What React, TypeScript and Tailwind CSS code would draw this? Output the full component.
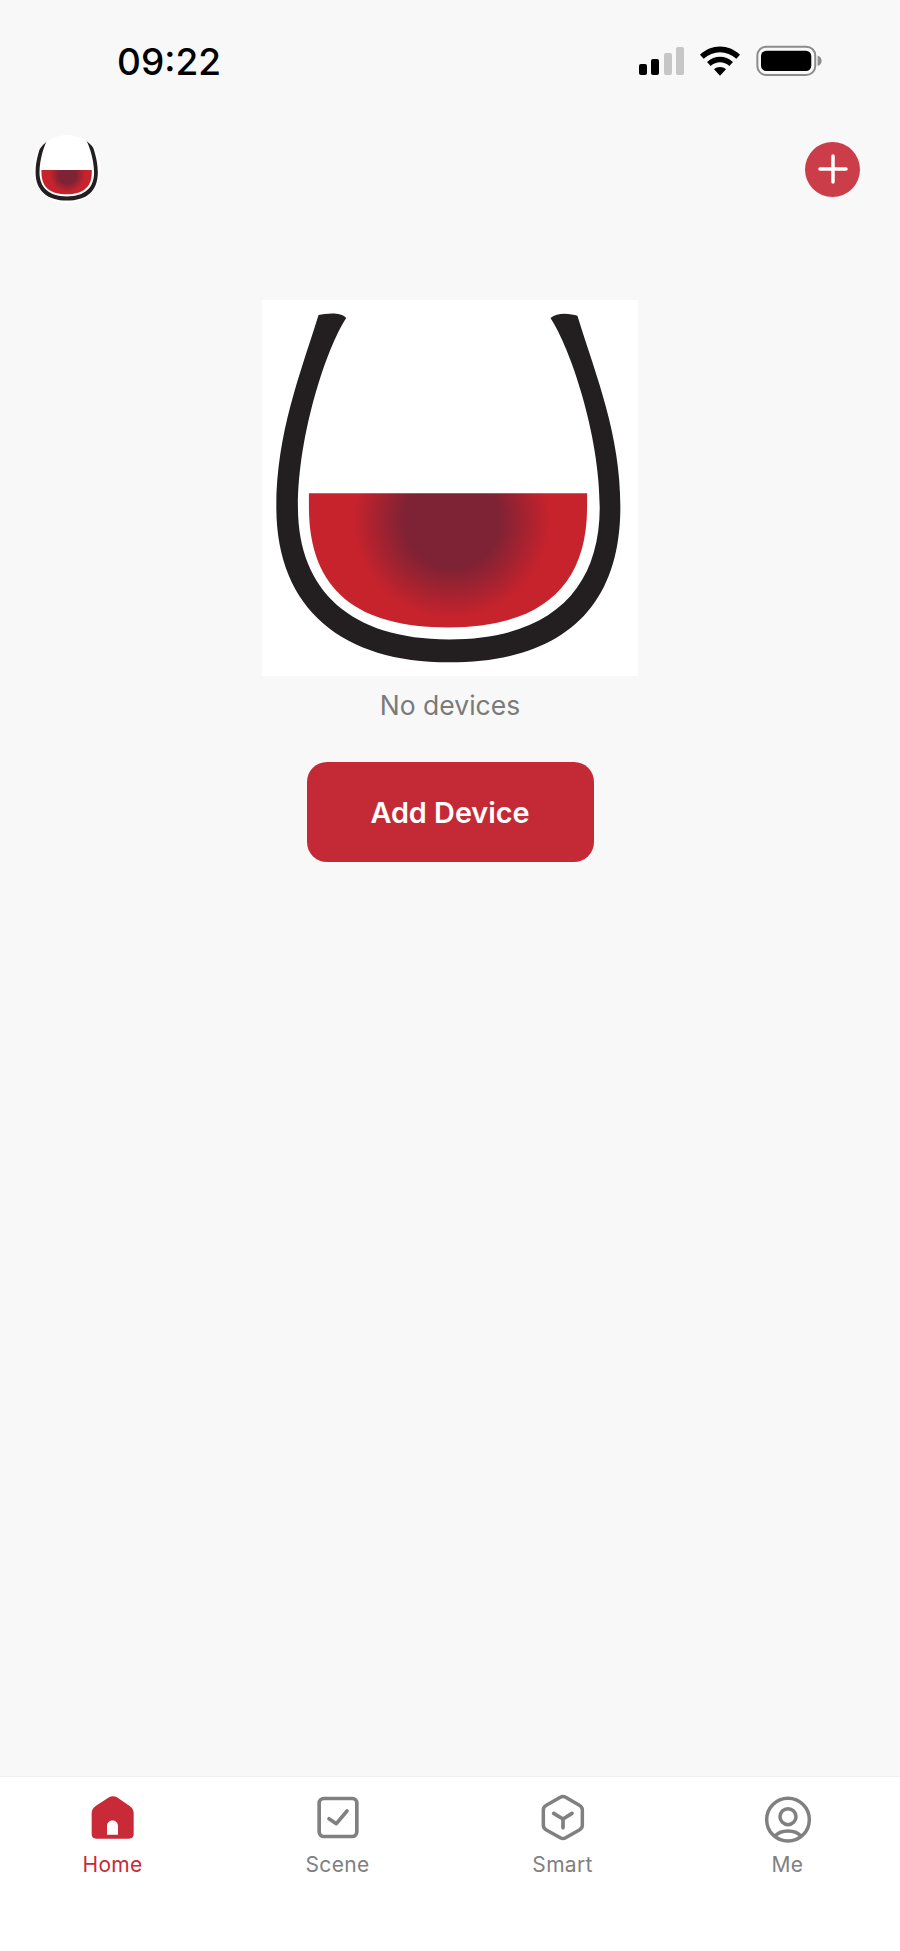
import { useId } from 'react';

function Glass({ className }: { className: string }) {
    const id = useId();
    return (
        <svg viewBox="35 28 1130 1130" className={className}>
            <defs>
                <radialGradient id={id} gradientUnits="userSpaceOnUse" cx="605" cy="690" r="295">
                    <stop offset="0.48" stopColor="#7e2235" />
                    <stop offset="1" stopColor="#c7232c" />
                </radialGradient>
            </defs>
            <rect x="35" y="28" width="1130" height="1130" fill="#ffffff" />
            <path
                fill="#231f20"
                d="M205 73 C150 250 78 430 78 650 C78 960 280 1117 597 1117 C930 1117 1112 960 1112 650 C1112 430 1040 260 983 75 C965 70 925 62 902 82 C960 170 1050 430 1050 650 C1050 900 900 1048 597 1048 C300 1048 143 900 143 650 C143 430 230 170 288 82 C270 62 225 70 205 73 Z"
            />
            <path
                fill={`url(#${id})`}
                d="M176 609 H1012 V650 C1012 900 860 1012 595 1012 C320 1012 176 900 176 650 Z"
            />
        </svg>
    );
}

function StatusBar() {
    return (
        <div className="flex h-[122px] items-center justify-between pl-[117px] pr-[77px]">
            <span className="text-[37px] font-medium leading-none text-black">09:22</span>
            <div className="flex items-center gap-[15px]">
                <div className="flex items-end gap-[4.5px]">
                    <div className="h-[11px] w-[8px] rounded-[2px] bg-black" />
                    <div className="h-[16px] w-[8px] rounded-[2px] bg-black" />
                    <div className="h-[22px] w-[8px] rounded-[2px] bg-[#c6c6c6]" />
                    <div className="h-[28px] w-[8px] rounded-[2px] bg-[#c6c6c6]" />
                </div>
                <svg viewBox="298 72 126 96" className="h-[32px] w-[42px]">
                    <path d="M301 101 C335 68 387 68 421 101 L410 113 C382 87 340 87 312 113 Z" />
                    <path d="M322 123 C345 102 377 102 400 123 L389 135 C372 120 350 120 333 135 Z" />
                    <path d="M343 145 C353 136 369 136 379 145 L361 164 Z" />
                </svg>
                <svg viewBox="468 73 200 96" className="h-[32px] w-[66.6px]">
                    <rect x="472" y="78" width="174" height="85" rx="27" fill="none" stroke="#8c8c8c" strokeWidth="6" />
                    <rect x="483" y="90" width="151" height="61" rx="16" fill="#000000" />
                    <path d="M653 105 C661 107 665 113 665 120 C665 127 661 134 653 136 Z" fill="#8c8c8c" />
                </svg>
            </div>
        </div>
    );
}

function TabIcon({ name }: { name: string }) {
    if (name === 'Home') {
        return (
            <svg viewBox="263 100 150 150" className="h-[50px] w-[50px]">
                <path
                    fill="#c82a37"
                    fillRule="evenodd"
                    d="M326 110 Q338 103 350 110 L388 136 Q400 144 400 158 L400 220 Q400 234 386 234 L288 234 Q274 234 274 220 L274 158 Q274 144 286 136 Z M320 222 L353 222 L353 197 C353 174 320 174 320 197 Z"
                />
            </svg>
        );
    }
    if (name === 'Scene') {
        return (
            <svg viewBox="938 100 150 150" className="h-[50px] w-[50px]" fill="none" stroke="#808080">
                <rect x="956.5" y="113.5" width="113" height="114" rx="14" strokeWidth="11" />
                <path d="M986 174 L1008 189 L1040 151" strokeWidth="11" strokeLinecap="round" strokeLinejoin="round" />
            </svg>
        );
    }
    if (name === 'Smart') {
        return (
            <svg viewBox="263 100 150 150" className="h-[50px] w-[50px]" fill="none" stroke="#808080">
                <path
                    d="M330 110 Q338 105 346 110 L387 134 Q396 139 396 148 L396 194 Q396 203 387 208 L346 231 Q338 236 330 231 L288 208 Q279 203 279 194 L279 148 Q279 139 288 134 Z"
                    strokeWidth="10.5"
                />
                <path d="M310 158 L338 175 L365 158 M338 175 L338 201" strokeWidth="11" strokeLinecap="round" strokeLinejoin="round" />
            </svg>
        );
    }
    return (
        <svg viewBox="938 100 150 150" className="h-[50px] w-[50px]" fill="none" stroke="#808080" strokeWidth="10.5">
            <circle cx="1013" cy="177" r="64" />
            <circle cx="1013" cy="168" r="24" />
            <path d="M973 228 C990 205 1036 205 1053 228" />
        </svg>
    );
}

const tabs = ['Home', 'Scene', 'Smart', 'Me'];

export default function App() {
    return (
        <div className="flex h-[1951px] w-[900px] flex-col overflow-hidden bg-[#f8f8f8] font-[Inter,sans-serif]">
            <StatusBar />

            <div className="flex h-[94px] items-center justify-between pl-[33px] pr-[40px]">
                <div className="h-[68px] w-[68px] overflow-hidden rounded-full">
                    <Glass className="h-[68px] w-[68px]" />
                </div>
                <button className="flex h-[55px] w-[55px] items-center justify-center rounded-full bg-[#cc3d4a]">
                    <svg viewBox="0 0 30 30" className="h-[30px] w-[30px]" stroke="#ffffff" strokeWidth="3.5" strokeLinecap="round">
                        <path d="M15 2 V28 M2 15 H28" />
                    </svg>
                </button>
            </div>

            <main className="flex flex-1 flex-col items-center pt-[84px]">
                <Glass className="h-[376px] w-[376px]" />
                <p className="mt-[13px] text-[26.5px] leading-[32px] text-[#7a7a7a]">No devices</p>
                <button className="mt-[41px] h-[100px] w-[287px] rounded-[20px] bg-[#c42a36] pt-px text-[28.8px] font-semibold text-white">
                    Add Device
                </button>
            </main>

            <nav className="grid h-[175px] grid-cols-4 border-t border-[#f0f0f0] bg-white pt-[17px]">
                {tabs.map((tab) => (
                    <div key={tab} className="flex flex-col items-center">
                        <TabIcon name={tab} />
                        <span
                            className={
                                tab === 'Home'
                                    ? 'mt-[7px] text-[21px] leading-[28px] tracking-[0.3px] text-[#c82a37]'
                                    : 'mt-[7px] text-[21px] leading-[28px] tracking-[0.3px] text-[#808080]'
                            }
                        >
                            {tab}
                        </span>
                    </div>
                ))}
            </nav>
        </div>
    );
}
